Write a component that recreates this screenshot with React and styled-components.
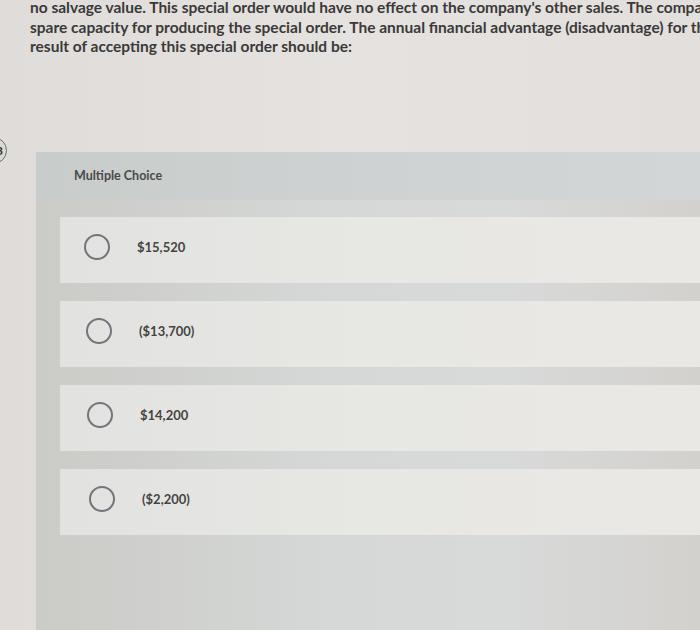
import React from "react";
import styled, { createGlobalStyle } from "styled-components";

const Global = createGlobalStyle`
  html, body {
    margin: 0;
    padding: 0;
    height: 630px;
    overflow: hidden;
  }
  body {
    background: linear-gradient(to right, #e0dcd9 0%, #e6e2df 50%, #e3dfdc 100%);
    font-family: Lato, "Liberation Sans", sans-serif;
  }
`;

const Page = styled.div`
  width: 700px;
  height: 630px;
  overflow: hidden;
  display: flex;
  flex-direction: column;
`;

const Question = styled.div`
  padding-left: 30px;
  margin-top: -2px;
  color: #3a3a3a;
  font-size: 15.5px;
  font-weight: 700;
  line-height: 19.5px;
`;

const Line = styled.div`
  white-space: nowrap;
`;

const Section = styled.section`
  position: relative;
  margin-top: 95px;
  margin-left: 36px;
  flex: 1;
  background: linear-gradient(to right, #cbcbc7 0%, #d5d8d7 45%, #d8dad9 70%, #d3d1ce 100%);
  padding-bottom: 40px;
`;

const Badge = styled.div`
  position: absolute;
  left: -56px;
  top: -15px;
  width: 27px;
  height: 27px;
  border-radius: 50%;
  border: 1.5px solid #6d6f6a;
  background: #d8dcd2;
  color: #333;
  font-size: 12px;
  font-weight: 700;
  display: flex;
  align-items: center;
  justify-content: flex-end;
  padding-right: 3px;
  box-sizing: border-box;
`;

const Header = styled.div`
  height: 48px;
  display: flex;
  align-items: center;
  padding-left: 38px;
  background: linear-gradient(to right, #c8cccb 0%, #cfd3d3 60%, #d3d6d6 100%);
  color: #4a4a4a;
  font-size: 12.5px;
  font-weight: 700;
`;

const List = styled.div`
  margin-top: 17px;
  margin-left: 24px;
  display: flex;
  flex-direction: column;
  gap: 18px;
`;

const Option = styled.div`
  height: 66px;
  display: flex;
  align-items: center;
  padding-left: ${(p) => p.$indent}px;
  background: linear-gradient(to right, #e2e3e0 0%, #e7e7e4 50%, #eae8e4 100%);
`;

const Radio = styled.span`
  width: 22px;
  height: 22px;
  border-radius: 50%;
  border: 2px solid #727579;
  flex-shrink: 0;
  margin-top: -6px;
`;

const Label = styled.span`
  margin-left: 27px;
  margin-top: -6px;
  color: #444;
  font-size: 13px;
  font-weight: 700;
`;

const options = [
  { text: "$15,520", indent: 24 },
  { text: "($13,700)", indent: 26 },
  { text: "$14,200", indent: 27 },
  { text: "($2,200)", indent: 29 },
];

export default function App() {
  return (
    <Page>
      <Global />
      <Question>
        <Line>
          no salvage value. This special order would have no effect on the company's other sales. The company has ample
        </Line>
        <Line>
          spare capacity for producing the special order. The annual financial advantage (disadvantage) for the company as a
        </Line>
        <Line>result of accepting this special order should be:</Line>
      </Question>
      <Section>
        <Badge>3</Badge>
        <Header>Multiple Choice</Header>
        <List>
          {options.map((o) => (
            <Option key={o.text} $indent={o.indent}>
              <Radio />
              <Label>{o.text}</Label>
            </Option>
          ))}
        </List>
      </Section>
    </Page>
  );
}
